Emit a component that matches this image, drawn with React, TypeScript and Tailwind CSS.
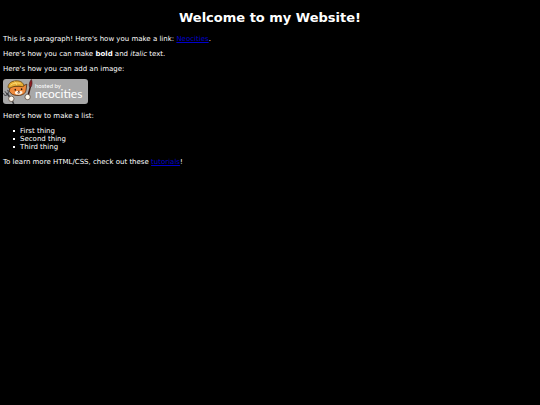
function NeocitiesBadge() {
  return (
    <svg
      role="img"
      aria-label="hosted by neocities"
      viewBox="0 0 85 25"
      className="-mt-px mb-px block h-[25px] w-[85px]"
    >
      <rect width="85" height="25" rx="3" fill="#a8a8a8" />
      {/* Fork */}
      <g stroke="#3a3a3e" strokeWidth="1" strokeLinecap="round" fill="none">
        <path d="M7.5 19 4 14.5" strokeWidth="1.5" />
        <path d="M0.6 14.5C1 16.6 2.4 17 4 15.8 5.6 14.6 5.8 13 4.8 11.2M2.2 12.6 4 15" />
        <path d="M9.3 22 10.5 24.5" strokeWidth="1.6" />
      </g>
      {/* Brush */}
      <path d="M25 17 27.4 7.5" stroke="#3a1710" strokeWidth="1.5" />
      <path d="M26.4 7.5C25.8 5 26.8 2.5 28.4 0.5 29.5 3 29.2 6 28 8Z" fill="#8e1c20" stroke="#3a1015" strokeWidth="0.6" />
      {/* Cat */}
      <g transform="translate(0 0.3) scale(1 0.88)">
        <path
          d="M7.5 8 6.2 13.2C7.5 16.8 11 18.6 15 18.4 19.5 18.2 22.4 16.3 23 12.6L23.8 5.6 19.5 7.6Z"
          fill="#ef8a3c"
          stroke="#3d2410"
          strokeWidth="0.8"
        />
        <path d="M12 14.4C13 13.2 14.5 13.2 15.7 13.8 17.2 12.8 18.9 13 19.6 14.4 19.2 16.7 17.5 17.6 14.8 17.4 12.5 17.2 11.6 16.2 12 14.4Z" fill="#fff4e5" />
        <path
          d="M5 8.8C5.3 4.5 8.5 2 13 1.7 17.5 1.6 20.2 3.6 20.8 7.2 21 8.4 20 8.6 18.8 8.2 14.5 7.2 11 7.8 7.5 9.6 6 10.2 4.9 10 5 8.8Z"
          fill="#e5ac35"
          stroke="#5b3b0b"
          strokeWidth="0.8"
        />
        <path d="M7.5 6.8C10 4.4 13.5 3.6 17.5 4.6M11.5 2.8C12.8 3.8 13.5 5.2 13.8 6.8" stroke="#ffe17a" strokeWidth="0.9" fill="none" />
        <ellipse cx="12.3" cy="11.8" rx="0.8" ry="1.1" fill="#28180e" />
        <ellipse cx="18.6" cy="11.2" rx="0.8" ry="1.1" fill="#28180e" />
        <path d="M15 13.4H16.5L15.8 14.2ZM14.2 15.2Q15.8 16.4 17.2 15" fill="#4a2416" stroke="#4a2416" strokeWidth="0.5" />
      </g>
      <circle cx="8.3" cy="19.8" r="2.7" fill="#fffaf0" stroke="#4d3a2b" strokeWidth="0.7" />
      <circle cx="24.6" cy="18" r="2.7" fill="#fffaf0" stroke="#4d3a2b" strokeWidth="0.7" />
      <g className="fill-white font-['Lato','Open_Sans',sans-serif]">
        <text x="32" y="9" className="text-[6px]">
          hosted by
        </text>
        <text x="32" y="19" className="text-[12px]">
          neocities
        </text>
      </g>
    </svg>
  );
}

function App() {
  return (
    <main className="min-h-screen bg-black px-[3px] py-[9px] font-['DejaVu_Sans',Verdana,sans-serif] text-[7px] leading-[8px] text-white">
      <h1 className="mb-[9px] text-center text-[13px] leading-[17px] font-bold">Welcome to my Website!</h1>

      <div className="flex flex-col gap-[7px]">
        <p>
          This is a paragraph! Here's how you make a link:{' '}
          <a href="https://neocities.org" className="text-[#0000cc] underline">
            Neocities
          </a>
          .
        </p>
        <p>
          Here's how you can make <strong>bold</strong> and <em>italic</em> text.
        </p>
        <p>Here's how you can add an image:</p>
        <NeocitiesBadge />
        <p>Here's how to make a list:</p>
        <ul className="pl-[10px]">
          {['First thing', 'Second thing', 'Third thing'].map((item) => (
            <li
              key={item}
              className="flex items-center gap-[5px] before:size-[2px] before:bg-white before:content-['']"
            >
              {item}
            </li>
          ))}
        </ul>
        <p>
          To learn more HTML/CSS, check out these{' '}
          <a href="https://neocities.org/tutorials" className="text-[#0000cc] underline">
            tutorials
          </a>
          !
        </p>
      </div>
    </main>
  );
}

export default App;
